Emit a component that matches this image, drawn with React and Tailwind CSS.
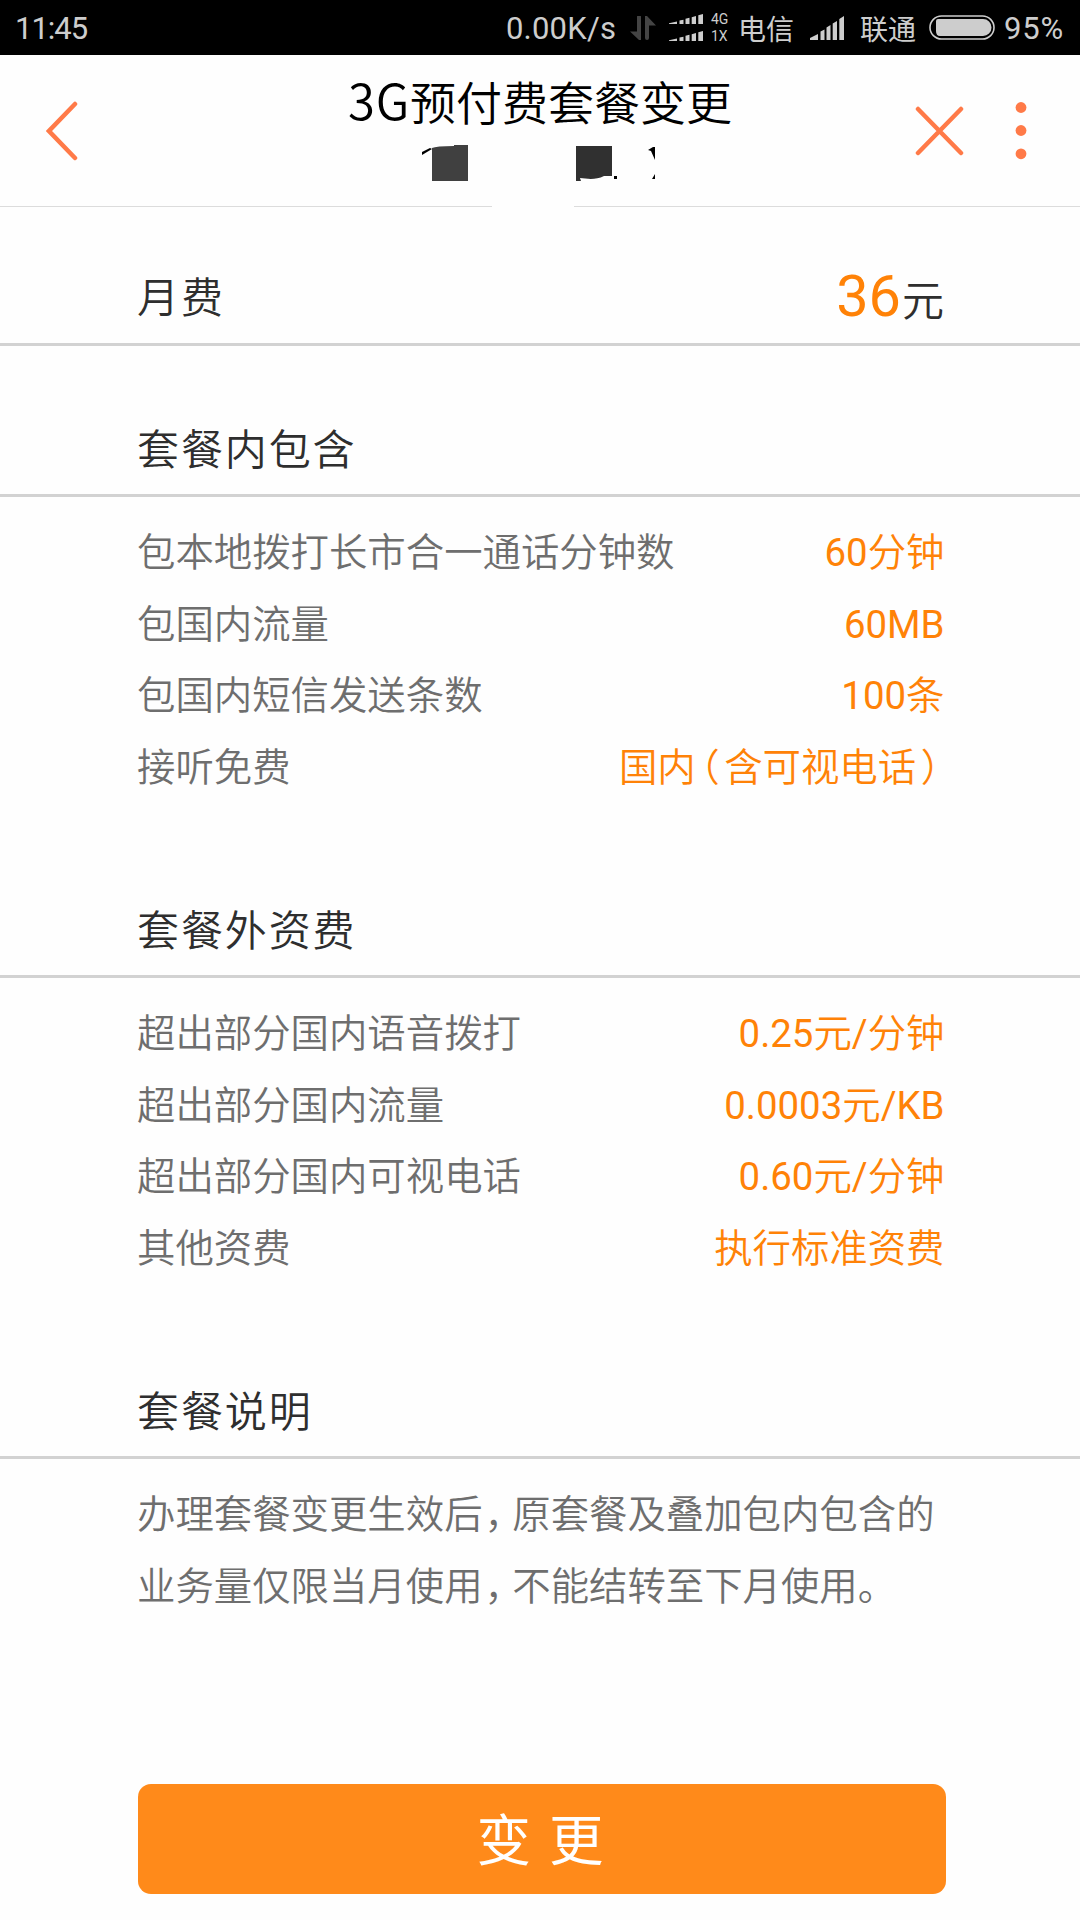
import React from "react";

const included = [
  { label: "包本地拨打长市合一通话分钟数", value: "60分钟" },
  { label: "包国内流量", value: "60MB" },
  { label: "包国内短信发送条数", value: "100条" },
  { label: "接听免费", value: "国内（含可视电话）" },
];

const extra = [
  { label: "超出部分国内语音拨打", value: "0.25元/分钟" },
  { label: "超出部分国内流量", value: "0.0003元/KB" },
  { label: "超出部分国内可视电话", value: "0.60元/分钟" },
  { label: "其他资费", value: "执行标准资费" },
];

const SignalBars = ({ className }) => (
  <svg viewBox="0 0 34 24" preserveAspectRatio="none" className={className} fill="#cdcdcd">
    <path d="M0 24V22L8 18V24ZM10.5 24V15.5L14.5 13.5V24ZM16.5 24V11.5L20.5 9V24ZM22.7 24V7.5L27 5V24ZM29.3 24V3L34 0V24Z" />
  </svg>
);

const StatusBar = () => (
  <div className="flex h-[55px] items-center bg-black pl-[15px] font-['Noto_Sans_CJK_SC',sans-serif] text-[28px] leading-[55px] text-[#cdcdcd]">
    <span className="w-[491px] pt-[2px] font-['Roboto','Noto_Sans_CJK_SC',sans-serif] text-[31px] tracking-[-1px]">11:45</span>
    <span className="w-[124px] whitespace-nowrap pt-[2px] font-['Roboto','Noto_Sans_CJK_SC',sans-serif] text-[31px] tracking-[0.2px]">0.00K/s</span>
    <svg viewBox="0 0 26 24" className="h-6 w-[26px] shrink-0" fill="#444">
      <path d="M7 1a2 2 0 0 1 4 0V24H9L0 15.500H7ZM15 0H17L26 9.500H19V22a2 2 0 0 1-4 0Z" />
    </svg>
    <div className="ml-[13px] flex flex-col gap-[7px]">
      <SignalBars className="h-[10px] w-[34px]" />
      <SignalBars className="h-[10px] w-[34px]" />
    </div>
    <div className="ml-2 w-[27px] font-['Roboto',sans-serif] text-[14px] leading-[17px]">
      <div>4G</div>
      <div>1X</div>
    </div>
    <span className="w-[72px] whitespace-nowrap pt-px">电信</span>
    <SignalBars className="h-6 w-[34px] shrink-0" />
    <span className="ml-[16px] w-[69px] whitespace-nowrap pt-px">联通</span>
    <svg viewBox="0 0 66 25" className="h-[25px] w-[66px] shrink-0">
      <rect x="1" y="1" width="64" height="23" rx="11.5" fill="none" stroke="#cdcdcd" strokeWidth="1.6" />
      <path d="M9 4H54a8.500 8.500 0 0 1 0 17H11Q7 21 7 16V6Q7 4 9 4Z" fill="#cdcdcd" />
    </svg>
    <span className="ml-[9px] pt-[2px] font-['Roboto',sans-serif] text-[31px] tracking-[0.8px]">95%</span>
  </div>
);

const Header = () => (
  <header className="flex h-[152px] flex-col">
    <div className="flex h-[151px] items-start">
      <div className="w-[300px] pl-[46px] pt-[46px]">
        <svg viewBox="0 0 32 60" className="h-[60px] w-8" fill="none" stroke="#ff7a48" strokeWidth="4.5" strokeLinecap="round">
          <path d="M29 3L3 30L29 57" />
        </svg>
      </div>
      <div className="flex w-[480px] flex-col items-center">
        <h1 className="mt-[13px] h-[75px] whitespace-nowrap text-[46px] font-[350] leading-[62px] text-black">
          <span className="text-[49px] tracking-[0.8px]">3G</span>预付费套餐变更
        </h1>
        <svg viewBox="0 0 240 42" className="h-[42px] w-60">
          <path d="M2 9L10 5L12 6L2 12Z" fill="#000" />
          <path d="M12 5Q16 3 34 3V2H48V38H12Z" fill="#404040" />
          <path d="M156 3H192V33H184C176 37 168 36 160 35L161 38H156Z" fill="#303030" />
          <path d="M194 33H197V36H194ZM228 7L233 4H235V17L231 8ZM232 36L235 31V36Z" fill="#000" />
        </svg>
      </div>
      <div className="flex pl-[135px] pt-[50px]">
        <svg viewBox="0 0 50 52" className="h-[52px] w-[50px]" fill="none" stroke="#ff7a48" strokeWidth="4.5" strokeLinecap="round">
          <path d="M3 4L46 48M46 4L3 48" />
        </svg>
        <svg viewBox="0 0 12 60" className="-mt-1 ml-[50px] h-[60px] w-3" fill="#ff7a48">
          <circle cx="6" cy="6.500" r="5.400" />
          <circle cx="6" cy="29.500" r="5.400" />
          <circle cx="6" cy="52.800" r="5.400" />
        </svg>
      </div>
    </div>
    <div className="flex h-px justify-between">
      <div className="w-[492px] bg-[#dcdcdc]" />
      <div className="w-[506px] bg-[#dcdcdc]" />
    </div>
  </header>
);

const Heading = ({ children }) => (
  <h2 className="border-b-[3px] border-[#d2d2d2] pb-[16px] pl-[137px] text-[42px] font-[350] leading-[62px] tracking-[1.9px] text-[#2e2e2e]">
    {children}
  </h2>
);

// Digits and latin stay regular, Chinese runs are lighter, brackets get a narrow cell
const Value = ({ text }) => (
  <span className="text-[#ff8207]">
    {text.split(/([（）]|[\w./]+)/).filter(Boolean).map((part, i) => {
      if (/[（）]/.test(part)) {
        return <span key={i} className="px-[4.600px] [font-feature-settings:'halt']">{part}</span>;
      }
      return <span key={i} className={/[\w./]/.test(part) ? "font-normal" : "font-[350]"}>{part}</span>;
    })}
  </span>
);

const Comma = () => <span className="pl-[2px] pr-[8.500px] [font-feature-settings:'halt']">，</span>;

const RateList = ({ rows }) => (
  <ul className="pl-[137px] pr-[135.5px] pt-[20px] font-['Roboto','Noto_Sans_CJK_SC',sans-serif] text-[38.4px] font-[350] leading-[71.5px]">
    {rows.map((row) => (
      <li key={row.label} className="flex justify-between whitespace-nowrap">
        <span className="text-[#6e6e6e]">{row.label}</span>
        <Value text={row.value} />
      </li>
    ))}
  </ul>
);

export default function App() {
  return (
    <div lang="zh-CN" className="flex h-[1920px] w-[1080px] flex-col overflow-hidden bg-[#fefefe] font-['Noto_Sans_CJK_SC',sans-serif]">
      <StatusBar />
      <Header />

      {/* Monthly fee */}
      <section className="flex h-[139px] items-end justify-between border-b-[3px] border-[#d2d2d2] pb-[14px] pl-[137px] pr-[136px] text-[42px] font-[350] leading-[62px] text-[#2e2e2e]">
        <span className="pb-[3px] tracking-[1.9px]">月费</span>
        <span>
          <span className="mr-px font-['Roboto',sans-serif] text-[57.6px] font-normal text-[#ff8207]">36</span>
          元
        </span>
      </section>

      <section className="h-[481px] pt-[70px]">
        <Heading>套餐内包含</Heading>
        <RateList rows={included} />
      </section>

      <section className="h-[481px] pt-[70px]">
        <Heading>套餐外资费</Heading>
        <RateList rows={extra} />
      </section>

      <section className="h-[476px] pt-[70px]">
        <Heading>套餐说明</Heading>
        <p className="whitespace-nowrap pl-[137px] pt-[20px] font-['Roboto','Noto_Sans_CJK_SC',sans-serif] text-[38.4px] font-[350] leading-[71.5px] text-[#6e6e6e]">
          办理套餐变更生效后<Comma />原套餐及叠加包内包含的
          <br />
          业务量仅限当月使用<Comma />不能结转至下月使用。
        </p>
      </section>

      <button className="ml-[138px] h-[110px] w-[808px] rounded-[13px] bg-[#ff8a1a] pb-[5px] pl-[14px] text-[54.5px] font-normal tracking-[18px] text-white">
        变更
      </button>
    </div>
  );
}
